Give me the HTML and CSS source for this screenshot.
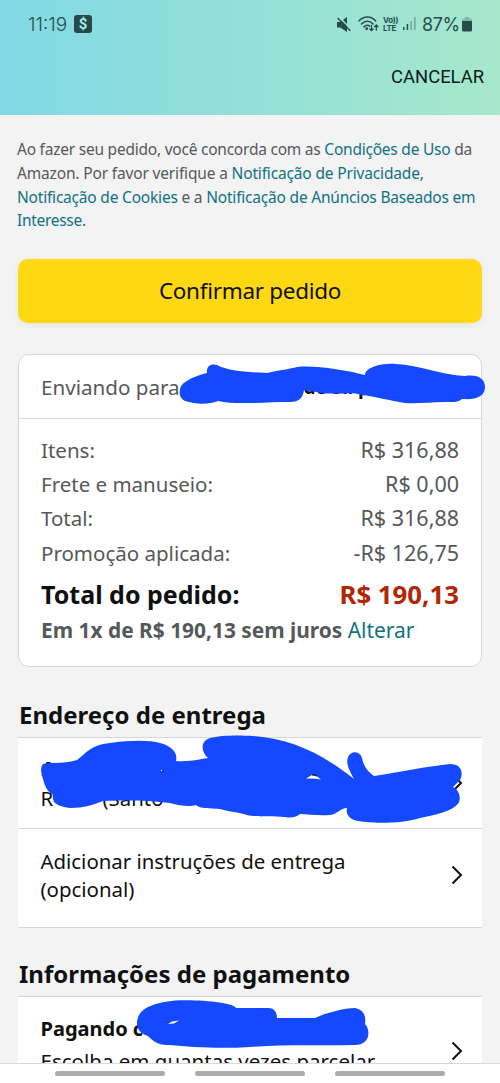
FILE: index.html
```html
<!DOCTYPE html>
<html lang="pt-BR">
<head>
<meta charset="utf-8">
<title>Confirmar pedido</title>
<link rel="stylesheet" href="styles.css">
</head>
<body>
<div class="screen">
  <header class="top">
    <div class="status">
      <span class="clock">11:19</span>
      <span class="cash">$</span>
      <svg class="mute" width="14" height="15" viewBox="0 0 14 15"><path d="M0 5h3.200L10 0v15L3.200 10.500H0z" fill="#294c4b"/><path d="M2 0 14 12" stroke="#9ce3d8" stroke-width="1.500"/><path d="M.5 1 13.300 13.700" stroke="#294c4b" stroke-width="1.500"/></svg>
      <svg class="wifi" width="21" height="16" viewBox="0 0 21 16" fill="none" stroke="#294c4b" stroke-width="1.600" stroke-linecap="round"><path d="M1 4.800C6-.3 13-.3 17.500 4.800M3.500 8C7 4.400 12 4.400 15 8M6 10.800C8 9 10 9 11.500 10"/><circle cx="8.700" cy="12.700" r=".6" fill="#294c4b"/><path d="M13.500 9.500v5M11.800 13l1.700 1.700 1.700-1.700M18.300 14V9M16.600 10.700l1.700-1.700 1.700 1.700" stroke-width="1.300"/></svg>
      <span class="volte"><span>Vo))</span><span>LTE</span></span>
      <svg class="signal" width="13" height="14" viewBox="0 0 13 14" fill="#294c4b"><path d="M0 10h1.500v3H0zM3.700 7h1.500v6H3.700z"/><path d="M7.400 4h1.500v9H7.400zM11.100 0h1.500v13h-1.500z" opacity=".4"/></svg>
      <span class="percent">87%</span>
      <svg class="battery" width="10" height="15" viewBox="0 0 10 15"><path d="M3 0h4v1.500h1.500Q10 1.500 10 3v2H0V3q0-1.500 1.500-1.500H3z" fill="#84b8ab"/><path d="M0 4h10v9q0 1.500-1.500 1.500h-7Q0 14.500 0 13z" fill="#294c4b"/></svg>
    </div>
    <div class="cancel">CANCELAR</div>
  </header>

  <main class="content">
    <p class="legal">
      <span class="l1">Ao fazer seu pedido, você concorda com as <a>Condições de Uso</a> da</span><br>
      <span class="l2">Amazon. Por favor verifique a <a>Notificação de Privacidade,</a></span><br>
      <span class="l3"><a>Notificação de Cookies</a> e a <a>Notificação de Anúncios Baseados em</a></span><br>
      <span class="l4"><a>Interesse</a>.</span>
    </p>
    <button class="confirm"><span>Confirmar pedido</span></button>

    <section class="summary">
      <div class="ship">Enviando para<b>de Sr. p</b></div>
      <div class="totals">
        <div class="row"><span>Itens:</span><span class="value">R$ 316,88</span></div>
        <div class="row"><span>Frete e manuseio:</span><span class="value">R$ 0,00</span></div>
        <div class="row"><span>Total:</span><span class="value">R$ 316,88</span></div>
        <div class="row"><span>Promoção aplicada:</span><span class="value">-R$ 126,75</span></div>
        <div class="row grand"><span>Total do pedido:</span><span class="value price">R$ 190,13</span></div>
        <div class="plan"><b>Em 1x de R$ 190,13 sem juros</b> <a>Alterar</a></div>
      </div>
    </section>

    <h2 class="h-address">Endereço de entrega</h2>
    <section class="list">
      <div class="item address">
        <div><b>A</b><br><span class="street">R</span><span>(Santo</span></div>
        <svg class="chevron" width="12" height="20" viewBox="0 0 12 20"><path d="m1.500 1.500 8.500 8.500-8.500 8.500"/></svg>
      </div>
      <div class="item instructions">
        <div>Adicionar instruções de entrega<br>(opcional)</div>
        <svg class="chevron" width="12" height="20" viewBox="0 0 12 20"><path d="m1.500 1.500 8.500 8.500-8.500 8.500"/></svg>
      </div>
    </section>

    <h2 class="h-payment">Informações de pagamento</h2>
    <section class="list payment">
      <div class="item pay">
        <div><b>Pagando c</b><br><span class="installments">Escolha em quantas vezes parcelar</span></div>
        <svg class="chevron" width="12" height="20" viewBox="0 0 12 20"><path d="m1.500 1.500 8.500 8.500-8.500 8.500"/></svg>
      </div>
    </section>
  </main>

  <nav class="bottom"><i></i><i></i><i></i></nav>

  <svg class="marker" width="500" height="1083" viewBox="0 0 500 1083">
    <path d="M180 390C180 382 195 376 207 373C206 366 211 363 217 365C228 371 245 372 267 373C280 370 290 369 297 367C315 365 345 370 365 375C365 368 380 363 396 364C420 365 440 375 465 376C478 374 485 379 485 387C485 396 477 400 462 399C458 403 452 402 445 402C430 402 415 404 405 403C390 401 375 396 361 395C352 392 345 394 335 393.500C322 394 312 391 304 390C303 398 299 402 290 402C265 402 235 405 218 401C208 405 195 404 185 401C180 398 179 395 180 390Z"/>
    <path d="M43 764C52 762 65 764 77 760C87 753 90 745 110 743C130 740 150 740 160 743C172 746 178 753 176 761C190 762 200 759 208 758C201 752 200 741 210 738C220 735 240 735 253 736C290 739 320 752 354 779C348 768 346 763 348 757C351 750 360 751 362 758C364 768 369 772 374 776C400 772 430 766 450 764C461 764 464 772 460 780L453 787C459 790 461 797 459 802C455 810 440 814 420 818C400 824 370 824 354 820C347 817 346 812 347 808C340 808 338 814 330 815C318 816 308 814 300 814C295 818 290 818 285 817C270 816 255 817 247 815C238 812 230 812 220 809C210 808 200 809 196 805C190 807 180 806 170 803C150 800 120 800 103 801C92 805 85 808 70 808C55 806 52 802 53 795C45 790 44 782 43 779C41 773 40 768 43 764Z"/>
    <path class="gap" d="M306 778.500 312 775 317 776.500 321 779.500Q314 778 306 778.500ZM161 770h1.500v1H161z"/>
    <path class="ink" d="M312 775.200 314 774.500 316.500 776M163 770v1.500"/>
    <path d="M137 1025C136 1010 150 1003 175 1000.500C200 999 235 1003 236 1008L268 1008C275 1008 277 1013 277 1018L315 1018C325 1013 345 1008 355 1008C365 1010 366 1018 365 1024C371 1030 370 1045 355 1045C320 1046 290 1044 250 1047C220 1049 190 1047 170 1045C158 1046 152 1040 148 1036C142 1034 138 1031 137 1025Z"/>
    <path class="gap" d="M168 1024 172 1021.500 179 1020.500 174 1023.500Z"/>
  </svg>
</div>
</body>
</html>
```
FILE: styles.css
```css
* { box-sizing: border-box; }
body { margin: 0; }
.screen { position: relative; width: 500px; height: 1083px; overflow: hidden; display: flex; flex-direction: column; background: #f3f3f3; font-family: "Noto Sans", sans-serif; color: #0f1111; }

.top { flex: none; height: 115px; background: linear-gradient(90deg, #82d9e5, #93dfd8 50%, #a7e8cc); }
.status { display: flex; align-items: center; height: 48px; padding: 0 27px 0 28px; color: #294c4b; font-family: Inter, sans-serif; }
.clock { font-size: 19px; font-weight: 300; width: 46px; }
.cash { width: 18px; height: 18px; border-radius: 3px; background: #25484d; color: #a4ecec; font: bold 15px/18px Roboto, sans-serif; text-align: center; }
.mute { margin-left: 245px; }
.wifi { margin-left: 7px; }
.volte { display: flex; flex-direction: column; width: 15px; margin-left: 4px; font: bold 8px/8px Inter, sans-serif; letter-spacing: -.3px; }
.signal { margin-left: 5px; }
.percent { width: 37px; margin-left: 6px; font-size: 18px; letter-spacing: -.4px; }
.battery { margin-left: 3px; }
.cancel { padding: 18px 16px 0 0; text-align: right; font: 18.400px/22px Roboto, sans-serif; color: #0b1c1a; }

.content { flex: 1; min-height: 0; overflow: hidden; padding: 23px 18px 0; }
a { color: #0f7282; }
.legal { margin: 0 -10px 0 -1px; height: 121px; font-size: 15.500px; line-height: 23.800px; color: #565959; white-space: nowrap; }
.l1 { letter-spacing: -.23px; }
.l2 { letter-spacing: -.16px; }
.l3 { letter-spacing: -.2px; }
.l4 { letter-spacing: -.3px; }
.confirm { display: block; width: 464px; height: 64px; padding: 0; border: 0; border-radius: 10px; background: #ffd814; box-shadow: 0 2px 5px #d5d9d980; font: 22.500px/30px "Noto Sans", sans-serif; letter-spacing: -.3px; color: #0f1111; }

.summary { height: 313px; margin-top: 31px; border: 1px solid #d5d9d9; border-radius: 11px; background: #fff; color: #565959; font-size: 20.500px; }
.ship { display: flex; align-items: center; height: 64px; padding: 0 22px; border-bottom: 1px solid #d5d9d9; white-space: nowrap; font-size: 20.600px; }
.ship b { margin-left: 124px; font-size: 19px; color: #0f1111; }
.totals { padding: 14px 22px 0; }
.row { display: flex; align-items: baseline; justify-content: space-between; height: 34.200px; line-height: 34.200px; white-space: nowrap; }
.value { font-size: 21.500px; }
.grand { height: 44px; padding-top: 3px; font-size: 25px; line-height: 42px; font-weight: bold; color: #0f1111; }
.price { font-size: 25.800px; color: #b12704; }
.plan { font-size: 20.900px; line-height: 32px; white-space: nowrap; }

h2 { margin: 0 0 0 1px; font-size: 24px; line-height: 32px; white-space: nowrap; }
.h-address { margin-top: 32px; }
.list { margin-top: 6px; border-top: 1px solid #d5d9d9; border-bottom: 1px solid #d5d9d9; background: #fff; font-size: 20.400px; line-height: 28.500px; }
.item { display: flex; align-items: center; justify-content: space-between; padding: 0 19px 0 22.500px; white-space: nowrap; }
.address { height: 91px; border-bottom: 1px solid #d5d9d9; }
.address b { font-size: 20px; margin-left: 1px; }
.street { display: inline-block; width: 62px; }
.instructions { height: 98px; padding-bottom: 6px; }
.chevron { fill: none; stroke: #0f1111; stroke-width: 2; }
.h-payment { margin-top: 30px; }
.pay { height: 108px; }
.pay div { padding-bottom: 13px; line-height: 33px; }
.pay b { font-size: 20px; }
.installments { font-size: 20.500px; }

.bottom { flex: none; display: flex; justify-content: center; gap: 30px; height: 20px; padding-top: 7px; border-top: 1px solid #d5d9d9; background: #fff; }
.bottom i { width: 110px; height: 5px; border-radius: 3px; background: #adadad; }
.marker { position: absolute; left: 0; top: 0; fill: #1549ff; }
.gap { fill: #fff; }
.ink { fill: none; stroke: #0f1111; stroke-width: 1.200; }
```
